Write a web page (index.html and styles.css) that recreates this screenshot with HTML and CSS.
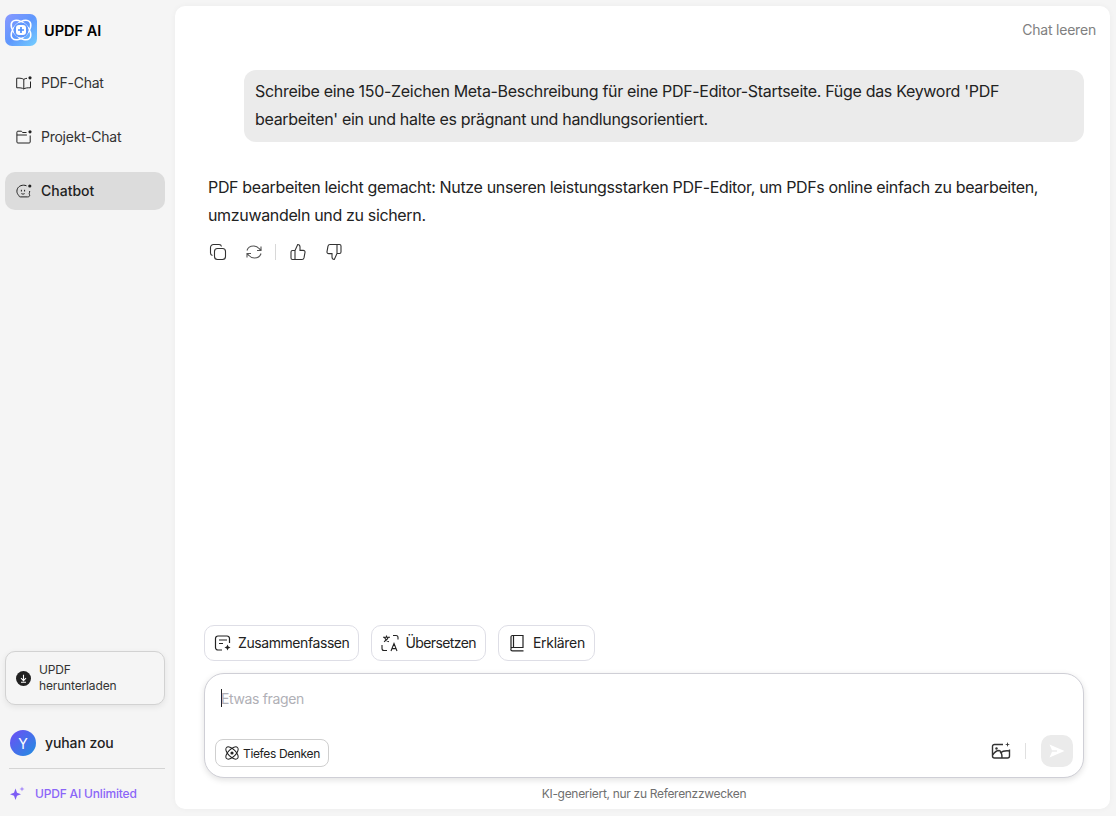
FILE: index.html
```html
<!DOCTYPE html>
<html lang="de">
<head>
<meta charset="utf-8">
<title>UPDF AI</title>
<link rel="stylesheet" href="styles.css">
</head>
<body>
<div class="app">
  <aside class="sidebar">
    <div class="brand">
      <span class="logo">
        <svg width="32" height="32" viewBox="0 0 32 32" fill="none"><g stroke="#fff" stroke-width="1.500"><ellipse cx="16" cy="16" rx="12" ry="7" transform="rotate(45 16 16)"/><ellipse cx="16" cy="16" rx="12" ry="7" transform="rotate(-45 16 16)"/></g><circle cx="16" cy="16" r="7.500" fill="#5f97fd"/><rect x="11" y="11" width="10" height="10" rx="3" fill="#fff"/><path d="M16 13v6M13 16h6" stroke="#4d8dfb" stroke-width="1.700"/></svg>
      </span>
      <span class="brand-name">UPDF AI</span>
    </div>
    <nav class="nav">
      <a class="nav-item">
        <svg class="nav-icon" viewBox="0 0 16 16" fill="none" stroke="#222" stroke-width="1"><path d="M7.800 4.400C6.600 3.400 4.200 3 .7 3.200v9.600c3.200-.1 5.800.100 7.100 1.200 1.300-1.100 3.600-1.300 6.700-1.200V6.500M7.800 4.400V14M11 3.300c-1.300.100-2.400.400-3.200 1.100"/><circle cx="14" cy="2.800" r="1.600" fill="#222" stroke="none"/></svg>
        <span>PDF-Chat</span>
      </a>
      <a class="nav-item">
        <svg class="nav-icon" viewBox="0 0 16 16" fill="none" stroke="#222" stroke-width="1"><path d="M10.500 3.500H6.700L5.300 2.200H1.900a1 1 0 0 0-1 1v9.800a1 1 0 0 0 1 1h11.300a1 1 0 0 0 1-1V6.500M.9 6h10"/><circle cx="14" cy="2.800" r="1.600" fill="#222" stroke="none"/></svg>
        <span>Projekt-Chat</span>
      </a>
      <a class="nav-item active">
        <svg class="nav-icon" viewBox="0 0 16 16" fill="none" stroke="#222" stroke-width="1"><path d="M10.500 2.800C9.500 2.300 8.500 2.200 7.500 2.200 3.800 2.200.9 4.700.9 8.200c0 1.600.7 3 1.700 4 .6.800.5 1.700 1.700 1.700h7.200c1 0 2.200-.3 2.200-1.500 0-.8-.5-1-.5-2 .3-.8.5-1.500.5-2.400"/><path d="M5.400 6.800v1.700M8.600 6.800v1.700M5.400 10.600c.8.600 2.400.600 3.200 0"/><circle cx="13.800" cy="3" r="1.600" fill="#222" stroke="none"/></svg>
        <span>Chatbot</span>
      </a>
    </nav>
    <div class="side-bottom">
      <button class="download">
        <span class="download-icon">
          <svg width="15" height="15" viewBox="0 0 15 15"><circle cx="7.500" cy="7.500" r="7.500" fill="#222"/><path d="M7.500 3.800v5.500M5 7.200l2.500 2.500L10 7.200M5 11.300h5" fill="none" stroke="#fff" stroke-width="1.100"/></svg>
        </span>
        <span class="download-text">UPDF herunterladen</span>
      </button>
      <div class="user">
        <span class="avatar">Y</span>
        <span class="user-name">yuhan zou</span>
      </div>
      <a class="unlimited">
        <svg width="16" height="16" viewBox="0 0 16 16" fill="#7c5cf5"><path d="M5.500 3.500 7 7.800 11 9.300 7 10.800 5.500 15 4 10.800 0 9.300 4 7.800z"/><path d="M12 1.500l.7 1.800 1.800.7-1.800.7-.7 1.800-.7-1.800-1.800-.7 1.800-.7z" fill="#a78bfa"/></svg>
        <span>UPDF AI Unlimited</span>
      </a>
    </div>
  </aside>
  <main class="main">
    <header class="top"><span class="clear">Chat leeren</span></header>
    <section class="conversation">
      <div class="user-msg">Schreibe eine 150-Zeichen Meta-Beschreibung für eine PDF-Editor-Startseite. Füge das Keyword 'PDF bearbeiten' ein und halte es prägnant und handlungsorientiert.</div>
      <div class="bot-msg">PDF bearbeiten leicht gemacht: Nutze unseren leistungsstarken PDF-Editor, um PDFs online einfach zu bearbeiten, umzuwandeln und zu sichern.</div>
      <div class="actions">
        <svg class="action" viewBox="0 0 18 18" fill="none" stroke="#333" stroke-width="1.100"><rect x="5.500" y="5.500" width="11" height="11" rx="3"/><path d="M12.500 3.500A2.500 2.500 0 0 0 10 1.500H4.500a3 3 0 0 0-3 3V10a2.500 2.500 0 0 0 2 2.500"/></svg>
        <svg class="action" viewBox="0 0 18 18" fill="none" stroke="#555" stroke-width="1.100"><path d="M2 7.500C2.800 4.800 5.300 3 8.500 3c2.700 0 4.300 1 5.500 2.500L16 7.500M16 3.500v4h-4M16 10.500c-.8 2.700-3.300 4.500-6.500 4.500-2.700 0-4.300-1-5.500-2.500L2 10.500M2 14.500v-4h4"/></svg>
        <span class="action-sep"></span>
        <svg class="action" viewBox="0 0 18 18" fill="none" stroke="#333" stroke-width="1.100"><path d="M6 7.500H3.500A1.500 1.500 0 0 0 2 9v6a1.500 1.500 0 0 0 1.500 1.500h9.500c1 0 1.800-.7 2-1.600l1-5.500c.2-1.100-.7-2-1.800-2H11V4c0-1.400-1-2.500-2.300-2.500L6 7.500v9"/></svg>
        <svg class="action" viewBox="0 0 18 18" fill="none" stroke="#333" stroke-width="1.100"><path d="M12 10.500h2.500A1.500 1.500 0 0 0 16 9V3a1.500 1.500 0 0 0-1.500-1.500H5c-1 0-1.800.7-2 1.600L2 8.600c-.2 1.100.7 2 1.800 2H7V14c0 1.400 1 2.500 2.300 2.500l2.700-6v-9"/></svg>
      </div>
    </section>
    <section class="composer-wrap">
      <div class="chips">
        <button class="chip">
          <svg class="chip-icon" viewBox="0 0 18 18" fill="none" stroke="#222" stroke-width="1.200"><path d="M8 16H4a2.500 2.500 0 0 1-2.500-2.500v-9A2.500 2.500 0 0 1 4 2h9a2.500 2.500 0 0 1 2.500 2.500V9M5 6h8M5 9.500h4"/><path d="M13.500 10.500l.9 2.100 2.100.9-2.100.9-.9 2.100-.9-2.100-2.100-.9 2.100-.9z" fill="#222" stroke="none"/></svg>
          <span>Zusammenfassen</span>
        </button>
        <button class="chip chip-translate">
          <svg class="chip-icon" viewBox="0 0 18 18" fill="none" stroke="#222" stroke-width="1.100"><path d="M2 3.200h7M5.500 1.500v1.700M3 7.800c2-1 3.600-2.700 4.300-4.600M3.500 3.500c.8 2 2.400 3.500 4.400 4.300M12 1.500h3a2 2 0 0 1 2 2v2M1 11v3.500a2 2 0 0 0 2 2h3M10 17l3-7.500 3 7.500M11 14.600h4"/></svg>
          <span>Übersetzen</span>
        </button>
        <button class="chip chip-book">
          <svg class="chip-icon" viewBox="0 0 18 18" fill="none" stroke="#222" stroke-width="1.200"><path d="M3 14V3a1.500 1.500 0 0 1 1.500-1.500H15v12H4.500a1.700 1.700 0 0 0 0 3.400H15.500M5.500 1.500v12"/></svg>
          <span>Erklären</span>
        </button>
      </div>
      <div class="composer">
        <div class="prompt"><span class="caret"></span><span class="placeholder">Etwas fragen</span></div>
        <div class="composer-row">
          <button class="deep">
            <svg width="14" height="14" viewBox="0 0 14 14" fill="none" stroke="#222" stroke-width="1"><ellipse cx="7" cy="7" rx="7.800" ry="3.800" transform="rotate(45 7 7)"/><ellipse cx="7" cy="7" rx="7.800" ry="3.800" transform="rotate(-45 7 7)"/><circle cx="7" cy="7" r="1.600" fill="#222" stroke="none"/></svg>
            <span>Tiefes Denken</span>
          </button>
          <div class="composer-tools">
            <svg class="img-icon" width="20" height="18" viewBox="0 0 20 18" fill="none" stroke="#333" stroke-width="1.400"><path d="M12 2.500H3.500a2 2 0 0 0-2 2v9.500a2 2 0 0 0 2 2h13a2 2 0 0 0 2-2V7.500M1.500 13.500c2-3.500 4-5 6.500-5 2.500.5 3 4 3 7.500M9 11c2-1.500 6-2.500 9.500-2"/><circle cx="5.500" cy="6.500" r="1.200" fill="#333" stroke="none"/><path d="M16.500 0l.6 1.900 1.900.6-1.900.6-.6 1.900-.6-1.900-1.900-.6 1.900-.6z" fill="#333" stroke="none"/></svg>
            <span class="tool-sep"></span>
            <button class="send">
              <svg width="16" height="14" viewBox="0 0 16 14"><path d="M.5.500 15.500 7 .5 13.500 3 7.800h5V6.200H3z" fill="#fff"/></svg>
            </button>
          </div>
        </div>
      </div>
      <p class="note">KI-generiert, nur zu Referenzzwecken</p>
    </section>
  </main>
</div>
</body>
</html>
```
FILE: styles.css
```css
* { box-sizing: border-box; }
html, body { margin: 0; height: 100%; }
body {
  background: #f5f5f5;
  font-family: Inter, "Noto Sans", sans-serif;
  color: #222;
  overflow: hidden;
}
button { font: inherit; color: inherit; cursor: pointer; }
.app { display: flex; height: 816px; padding: 6px 6px 7px 0; }

.sidebar { width: 175px; flex: none; display: flex; flex-direction: column; padding: 14px 10px 15px 5px; margin-top: -6px; margin-bottom: -7px; }
.brand { display: flex; align-items: center; gap: 7px; height: 32px; }
.logo { width: 32px; height: 32px; border-radius: 7px; background: linear-gradient(135deg, #8a98ff 0%, #5f97fd 50%, #74d0ff 100%); display: block; }
.logo svg { display: block; }
.brand-name { font-size: 14.500px; font-weight: 600; color: #000; }
.nav { display: flex; flex-direction: column; gap: 16px; margin-top: 18px; }
.nav-item { display: flex; align-items: center; gap: 9px; height: 38px; padding: 0 0 1px 11px; border-radius: 10px; font-size: 14px; letter-spacing: -.25px; color: #333; }
.nav-item span { margin-top: -1px; }
.nav-item.active { background: #dcdcdc; font-weight: 500; letter-spacing: 0; color: #222; }
.nav-icon { width: 16px; height: 16px; flex: none; }
.side-bottom { margin-top: auto; display: flex; flex-direction: column; }
.download { display: flex; align-items: center; gap: 8px; width: 160px; height: 54px; padding: 0 10px; background: #f5f5f5; border: 1px solid #d2d2d2; border-radius: 10px; box-shadow: 0 2px 6px rgba(0,0,0,.08); text-align: left; font-size: 12px; letter-spacing: -.15px; line-height: 16px; color: #333; }
.download-icon { display: flex; flex: none; }
.download-text { width: 90px; }
.user { display: flex; align-items: center; gap: 9px; margin-top: 25px; padding-left: 5px; height: 26px; }
.avatar { width: 26px; height: 26px; border-radius: 50%; background: linear-gradient(135deg, #6f4df6, #1f8fe0); color: #fff; font-size: 14px; display: flex; align-items: center; justify-content: center; }
.user-name { font-size: 14px; font-weight: 500; letter-spacing: -.1px; color: #222; margin-top: -2px; }
.unlimited { display: flex; align-items: center; gap: 9px; margin: 12px 0 0 4px; padding: 16px 4px 0 1px; border-top: 1px solid #d4d4d4; font-size: 12px; font-weight: 500; letter-spacing: -.18px; color: #8b66f8; width: 156px; }

.main { flex: 1; min-width: 0; background: #fff; border-radius: 10px; display: flex; flex-direction: column; box-shadow: 0 0 6px rgba(0,0,0,.04); }
.top { display: flex; justify-content: flex-end; padding: 15px 14px 0; height: 64px; }
.clear { font-size: 14px; letter-spacing: -.2px; color: #808080; line-height: 18px; }
.conversation { flex: 1; min-height: 0; padding: 0 26px 0 33px; }
.user-msg { margin-left: 36px; padding: 7px 12px 9px 11px; background: #ebebeb; border-radius: 12px; font-size: 16px; letter-spacing: -.31px; line-height: 28px; color: #222; }
.bot-msg { margin-top: 31px; font-size: 16px; letter-spacing: -.34px; line-height: 28px; color: #222; }
.actions { display: flex; align-items: center; gap: 18px; margin-top: 14px; padding-left: 1px; height: 18px; }
.action { width: 18px; height: 18px; flex: none; }
.action-sep { width: 1px; height: 16px; background: #d8d8d8; margin: 0 -5px 0 -6px; }

.composer-wrap { padding: 0 26px 7px 29px; }
.chips { display: flex; gap: 12px; }
.chip { display: flex; align-items: center; gap: 6px; height: 36px; padding: 0 9px; background: #fff; border: 1px solid #dedee6; border-radius: 10px; font-size: 14px; letter-spacing: -.42px; color: #222; }
.chip span { margin-top: -2px; }
.chip-translate { letter-spacing: -.6px; }
.chip-book { gap: 7px; letter-spacing: -.3px; }
.chip-icon { width: 18px; height: 18px; flex: none; }
.composer { margin-top: 12px; height: 105px; border: 1px solid #cfcfd6; border-radius: 20px; box-shadow: 0 2px 6px rgba(0,0,0,.12); background: #fff; padding: 13px 10px 10px; display: flex; flex-direction: column; justify-content: space-between; }
.prompt { display: flex; align-items: center; height: 22px; padding-left: 6px; font-size: 14px; letter-spacing: -.35px; }
.caret { width: 1px; height: 18px; margin-right: -1px; background: #222; }
.placeholder { color: #b0b0b6; }
.composer-row { display: flex; justify-content: space-between; align-items: flex-end; }
.deep { display: flex; align-items: center; gap: 4px; height: 28px; padding: 0 8px 0 9px; background: #fff; border: 1px solid #cfcfcf; border-radius: 8px; font-size: 12px; letter-spacing: -.36px; color: #222; }
.composer-tools { display: flex; align-items: center; }
.img-icon { display: block; }
.tool-sep { width: 1px; height: 16px; background: #e0e0e0; margin: 0 15px 0 14px; }
.send { width: 32px; height: 32px; border: 0; border-radius: 10px; background: #ebebeb; display: flex; align-items: center; justify-content: center; padding: 0; }
.note { margin: 8px 0 0; text-align: center; font-size: 12px; letter-spacing: -.31px; line-height: 16px; color: #6f6f6f; }
```
